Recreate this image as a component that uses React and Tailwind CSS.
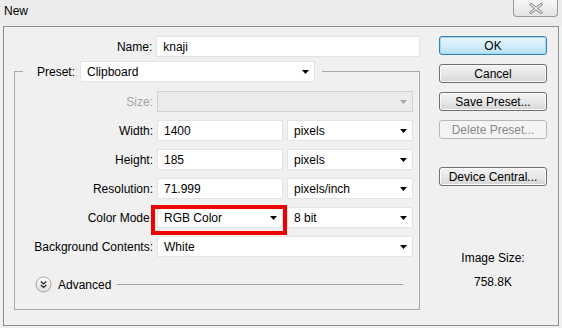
import React from "react";

const Arrow = ({ color = "#000" }) => (
  <svg width="7" height="4" viewBox="0 0 7 4" className="shrink-0">
    <path d="M0 0H7L3.5 4Z" fill={color} />
  </svg>
);

const Dropdown = ({ text, className, disabled }) => (
  <div
    className={
      "h-[21px] flex items-center justify-between pl-[6px] pr-[5px] border " +
      (disabled ? "bg-[#ececec] border-[#d2d2d2]" : "bg-white border-[#e4e4e4]") +
      " " +
      className
    }
  >
    <span className="leading-[14px] whitespace-nowrap">{text}</span>
    <Arrow color={disabled ? "#a8a8a8" : "#000"} />
  </div>
);

const Input = ({ text, className }) => (
  <div className={"h-[21px] flex items-center pl-[6px] bg-white border border-[#e4e4e4] " + className}>
    <span className="leading-[14px] whitespace-nowrap">{text}</span>
  </div>
);

const Row = ({ label, gray, children }) => (
  <div className="flex items-center h-[21px]">
    <span className={"w-[138px] text-right leading-[14px] whitespace-nowrap " + (gray ? "text-[#a6a6a6]" : "")}>
      {label}
    </span>
    <div className="ml-[4px] flex gap-[4px]">{children}</div>
  </div>
);

const Button = ({ children, variant }) => {
  let cls =
    "h-[19px] flex items-center justify-center rounded-[3px] border leading-[14px] whitespace-nowrap ";
  if (variant === "ok")
    cls +=
      "border-[#3c7fb1] bg-linear-to-b from-[#e9f6fd] via-[#d4eefb] to-[#b6e0f6] shadow-[inset_0_0_0_1px_#9fdcf9]";
  else if (variant === "disabled")
    cls += "border-[#b5b9bc] bg-[#f4f4f4] text-[#8a8a8a]";
  else
    cls +=
      "border-[#707070] bg-linear-to-b from-[#f3f3f3] via-[#e8e8e8] to-[#d5d5d5] shadow-[inset_0_0_0_1px_#fbfbfb]";
  return <div className={cls}>{children}</div>;
};

export default function App() {
  return (
    <div className="w-[562px] h-[328px] bg-[#f0f0f0] overflow-hidden flex flex-col text-[12px] text-black font-['Liberation_Sans','Arial',sans-serif]">
      {/* title bar */}
      <div className="h-[26px] flex items-start justify-between bg-[#ececec]">
        <span className="pl-[4px] pt-[4px] leading-[14px]">New</span>
        <div className="mr-[4px] w-[45px] h-[17px] border border-t-0 border-[#9a9a9a] rounded-b-[4px] bg-linear-to-b from-[#f6f6f6] to-[#e4e4e4] flex items-center justify-center">
          <svg width="14" height="11" viewBox="0 0 14 11">
            <path d="M2 1.5L12 9.5M12 1.5L2 9.5" stroke="#8a8a8a" strokeWidth="3" strokeLinecap="square" />
            <path d="M2 1.5L12 9.5M12 1.5L2 9.5" stroke="#f4f4f4" strokeWidth="1.2" strokeLinecap="square" />
          </svg>
        </div>
      </div>

      {/* main frame */}
      <div className="ml-[3px] w-[556px] h-[300px] border border-[#8f8f8f] flex">
        {/* left column */}
        <div className="w-[416px] pt-[9px] flex flex-col">
          <div className="flex items-center h-[21px]">
            <span className="w-[149px] text-right leading-[14px]">Name:</span>
            <Input text="knaji" className="ml-[4px] w-[265px]" />
          </div>

          <fieldset className="mt-[4px] ml-[10px] w-[406px] border border-[#a9a9a9] pb-[16px]">
            <legend className="ml-[8px] pl-[14px] pr-[7px]">
              <div className="flex items-center">
                <span className="leading-[14px]">Preset:</span>
                <Dropdown text="Clipboard" className="ml-[5px] w-[235px]" />
              </div>
            </legend>
            <div className="pt-[9px] flex flex-col gap-[8px]">
              <Row label="Size:" gray>
                <Dropdown text="" disabled className="w-[256px]" />
              </Row>
              <Row label="Width:">
                <Input text="1400" className="w-[126px]" />
                <Dropdown text="pixels" className="w-[126px]" />
              </Row>
              <Row label="Height:">
                <Input text="185" className="w-[126px]" />
                <Dropdown text="pixels" className="w-[126px]" />
              </Row>
              <Row label="Resolution:">
                <Input text="71.999" className="w-[126px]" />
                <Dropdown text="pixels/inch" className="w-[126px]" />
              </Row>
              <Row label="Color Mode:">
                <div className="relative">
                  <Dropdown text="RGB Color" className="w-[126px]" />
                  <div className="absolute -left-[6px] -top-[2px] w-[136px] h-[30px] border-[4px] border-[#f20000]" />
                </div>
                <Dropdown text="8 bit" className="w-[126px]" />
              </Row>
              <Row label="Background Contents:">
                <Dropdown text="White" className="w-[256px]" />
              </Row>
            </div>
            <div className="mt-[19px] h-[17px] flex items-center pl-[20px] pr-[16px]">
              <svg width="17" height="17" viewBox="0 0 17 17" className="shrink-0">
                <defs>
                  <linearGradient id="adv" x1="0" y1="0" x2="0" y2="1">
                    <stop offset="0" stopColor="#ffffff" />
                    <stop offset="1" stopColor="#dcdcdc" />
                  </linearGradient>
                </defs>
                <circle cx="8.5" cy="8.5" r="7.5" fill="url(#adv)" stroke="#a4a4a4" />
                <path d="M5.8 5.6L8.5 7.9L11.2 5.6M5.8 9.1L8.5 11.4L11.2 9.1" stroke="#222" strokeWidth="1.3" fill="none" />
              </svg>
              <span className="ml-[6px] leading-[14px]">Advanced</span>
              <div className="ml-[6px] flex-1 h-px bg-[#a0a0a0]" />
            </div>
          </fieldset>
        </div>

        {/* right column */}
        <div className="ml-[19px] w-[108px] pt-[9px] flex flex-col">
          <Button variant="ok">OK</Button>
          <div className="mt-[9px]"><Button>Cancel</Button></div>
          <div className="mt-[9px]"><Button>Save Preset...</Button></div>
          <div className="mt-[9px]"><Button variant="disabled">Delete Preset...</Button></div>
          <div className="mt-[28px]"><Button>Device Central...</Button></div>
          <div className="mt-[65px] text-center leading-[14px]">Image Size:</div>
          <div className="mt-[10px] text-center leading-[14px]">758.8K</div>
        </div>
      </div>
    </div>
  );
}
